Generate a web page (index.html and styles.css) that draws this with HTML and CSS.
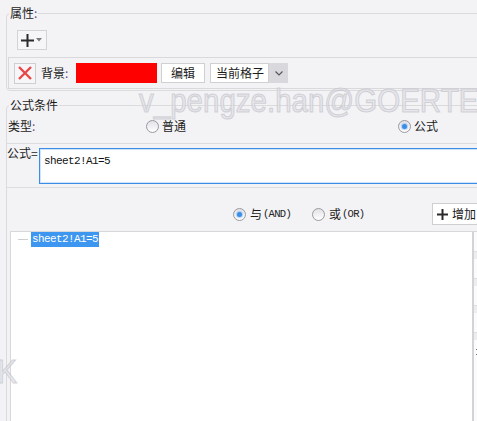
FILE: index.html
```html
<!DOCTYPE html>
<html>
<head>
<meta charset="utf-8">
<link rel="stylesheet" href="styles.css">
</head>
<body>
<div class="page">
  <div class="group g1">
    <div class="gtitle">属性<span class="colon">:</span></div>
    <div class="addbtn">
      <svg width="13" height="13" viewBox="0 0 13 13"><path d="M6.5 0V13M0 6.5H13" stroke="#2a2a2a" stroke-width="2"/></svg>
      <svg width="6" height="4" viewBox="0 0 6 4"><path d="M0 0H6L3 3.5Z" fill="#7a7a7a"/></svg>
    </div>
    <div class="bgrow">
      <div class="xbtn">
        <svg width="14" height="14" viewBox="0 0 14 14"><path d="M1 1L13 13M13 1L1 13" stroke="#e8474a" stroke-width="2.4"/></svg>
      </div>
      <span class="lbl">背景<span class="colon">:</span></span>
      <div class="swatch"></div>
      <div class="btn edit">编辑</div>
      <div class="select">
        <span class="sel-text">当前格子</span>
        <span class="sel-arrow"><svg width="8" height="5" viewBox="0 0 8 5"><path d="M0.5 0.5L4 4L7.5 0.5" stroke="#555" stroke-width="1.1" fill="none"/></svg></span>
      </div>
    </div>
  </div>

  <div class="group g2">
    <div class="gtitle">公式条件</div>
    <div class="typerow">
      <span class="tlabel">类型<span class="colon">:</span></span>
      <span class="radio"><span class="circle"></span><span>普通</span></span>
      <span class="radio"><span class="circle on"></span><span>公式</span></span>
    </div>
    <div class="frow">
      <span class="flabel">公式=</span>
      <div class="finput">sheet2!A1=5</div>
    </div>
    <div class="logicrow">
      <span class="radio lg-and"><span class="circle on"></span><span class="zh">与</span><span class="en">(AND)</span></span>
      <span class="radio lg-or"><span class="circle"></span><span class="zh">或</span><span class="en">(OR)</span></span>
      <div class="addcond">
        <svg width="11" height="11" viewBox="0 0 11 11"><path d="M5.5 0V11M0 5.5H11" stroke="#2a2a2a" stroke-width="2"/></svg>
        <span>增加</span>
      </div>
    </div>
    <div class="treewrap">
      <div class="tree">
        <div class="titem"><span class="tline"></span><span class="tsel">sheet2!A1=5</span></div>
      </div>
      <div class="side">
        <div class="sc"></div>
        <div class="sc"></div>
        <div class="sc"></div>
        <div class="sc"></div>
        <div class="dots"></div>
      </div>
    </div>
  </div>

  <div class="wm wm1">v_pengze.han@GOERTEK</div>
  <div class="wm wm2">v_pengze.han@GOERTEK</div>
</div>
</body>
</html>
```
FILE: styles.css
```css
body {
  margin: 0;
  background: #f3f3f6;
  font-family: "Noto Sans CJK SC", "Microsoft YaHei", sans-serif;
  font-size: 12px;
  line-height: 16px;
  color: #1b1b1b;
}
.page {
  position: relative;
  width: 477px;
  height: 421px;
  overflow: hidden;
}
.group {
  width: 560px;
  margin-left: 6px;
  box-sizing: border-box;
  border: 1px solid #dbdbde;
  border-radius: 4px;
}
.g1 {
  margin-top: 13px;
  padding-bottom: 1px;
}
.g2 {
  margin-top: 14px;
  height: 420px;
}
.gtitle {
  margin: -9px 0 0 2px;
  width: fit-content;
  height: 16px;
  padding: 0 1px;
  background: #f3f3f6;
}
.colon { color: #6a4a86; }

.addbtn {
  margin: 9px 0 0 10px;
  width: 30px;
  height: 20px;
  box-sizing: border-box;
  border: 1px solid #d3d3d6;
  background: #f6f6f8;
  display: flex;
  align-items: center;
  padding-left: 3px;
  gap: 2px;
}
.bgrow {
  margin: 7px 0 0 1px;
  height: 32px;
  box-sizing: border-box;
  border: 1px solid #d9d9dc;
  display: flex;
  align-items: center;
}
.xbtn {
  margin-left: 5px;
  width: 22px;
  height: 21px;
  box-sizing: border-box;
  border: 1px solid #cfcfd2;
  background: #f6f6f8;
  display: flex;
  align-items: center;
  justify-content: center;
}
.lbl {
  margin-left: 5px;
  width: 35px;
}
.swatch {
  width: 81px;
  height: 20px;
  background: #ff0000;
}
.btn {
  box-sizing: border-box;
  height: 20px;
  border: 1px solid #d0d0d3;
  background: #fff;
  display: flex;
  align-items: center;
  justify-content: center;
}
.edit {
  margin-left: 4px;
  width: 44px;
}
.select {
  margin-left: 5px;
  width: 78px;
  height: 20px;
  display: flex;
}
.sel-text {
  box-sizing: border-box;
  width: 59px;
  border: 1px solid #d0d0d3;
  background: #fff;
  padding-left: 5px;
  line-height: 18px;
}
.sel-arrow {
  flex: 1;
  background: #d9d9dd;
  display: flex;
  align-items: center;
  justify-content: center;
}

.typerow {
  margin-top: 3px;
  height: 28px;
  box-sizing: border-box;
  padding: 2px 0 0 1px;
  border-bottom: 1px solid #dddde0;
  display: grid;
  grid-template-columns: 138px 252px auto;
  align-items: start;
}
.radio {
  display: flex;
  align-items: center;
  gap: 3px;
  height: 16px;
}
.circle {
  width: 13px;
  height: 13px;
  box-sizing: border-box;
  border-radius: 50%;
  border: 1px solid #9a9a9e;
  background: linear-gradient(#e2e2e6, #ffffff);
  display: flex;
  align-items: center;
  justify-content: center;
}
.circle.on::after {
  content: "";
  width: 5px;
  height: 5px;
  border-radius: 50%;
  background: #3b8ee8;
  box-shadow: 0 0 1px 1px rgba(59, 142, 232, 0.35);
}

.frow {
  display: flex;
  padding-bottom: 3px;
  border-bottom: 1px solid #dddde0;
}
.flabel {
  width: 32px;
  margin-top: 1px;
}
.finput {
  margin-top: 4px;
  flex: 1;
  height: 36px;
  box-sizing: border-box;
  border: 1px solid #3b8de5;
  box-shadow: inset 0 0 0 1px rgba(59, 141, 229, 0.25);
  background: #fff;
  padding: 6px 0 0 4px;
  font-family: "Liberation Mono", monospace;
  font-size: 11px;
  line-height: 12px;
  letter-spacing: -0.6px;
  color: #111;
}

.logicrow {
  display: flex;
  align-items: center;
  height: 22px;
  padding: 15px 0 6px 0;
}
.lg-and {
  margin-left: 226px;
  width: 79px;
}
.lg-or {
  width: 120px;
}
.logicrow .zh { margin-left: 1px; }
.logicrow .en {
  font-family: "Liberation Mono", monospace;
  font-size: 10.5px;
  letter-spacing: -0.7px;
  color: #222;
  margin-left: -2px;
}
.addcond {
  height: 22px;
  width: 80px;
  box-sizing: border-box;
  border: 1px solid #cfcfd2;
  background: #fff;
  display: flex;
  align-items: center;
  padding-left: 4px;
  gap: 4px;
}

.treewrap {
  display: flex;
  margin-left: 3px;
  height: 220px;
}
.tree {
  width: 462px;
  box-sizing: border-box;
  border-left: 1px solid #d8d8dc;
  border-top: 1px solid #d8d8dc;
  background: #fff;
}
.titem {
  display: flex;
  align-items: center;
  height: 15px;
}
.tline {
  margin-left: 7px;
  width: 10px;
  height: 1px;
  background: #cfcfd2;
}
.tsel {
  margin-left: 3px;
  padding: 0 1px;
  height: 15px;
  line-height: 15px;
  background: #3d96ef;
  color: #fff;
  font-family: "Liberation Mono", monospace;
  font-size: 11px;
  letter-spacing: -0.6px;
}
.side {
  width: 40px;
  box-sizing: border-box;
  border-left: 2px solid #d3d3d7;
  border-top: 1px solid #d8d8dc;
  background: #fbfbfc;
  padding-top: 19px;
}
.sc {
  height: 8px;
  box-sizing: border-box;
  background: #ededf0;
  border-top: 1px solid #dedee1;
  margin-bottom: 19px;
}
.dots {
  margin: -10px 0 0 2px;
  width: 2px;
  height: 6px;
  border-top: 1px solid #777;
  border-bottom: 1px solid #777;
  box-sizing: border-box;
}

.wm {
  position: absolute;
  white-space: nowrap;
  pointer-events: none;
  font-family: "Liberation Sans", Arial, sans-serif;
  font-size: 29.5px;
  line-height: 26px;
  color: rgba(228, 228, 233, 0.75);
  -webkit-text-stroke: 1px rgba(196, 196, 202, 0.7);
  transform: scaleY(1.13);
  transform-origin: 0 23px;
}
.wm1 {
  top: 89px;
  left: 139px;
}
.wm2 {
  top: 360px;
  right: 460px;
}
```
